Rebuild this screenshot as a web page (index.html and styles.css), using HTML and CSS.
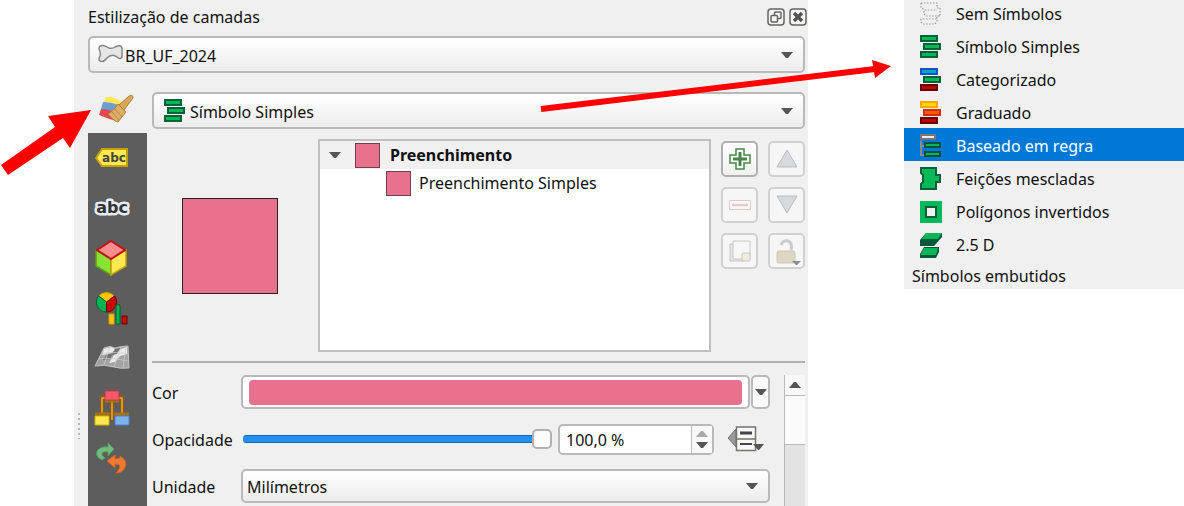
FILE: index.html
```html
<!DOCTYPE html>
<html lang="pt-BR">
<head>
    <meta charset="UTF-8">
    <meta name="viewport" content="width=device-width, initial-scale=1.0">
    <title>Estilização de camadas</title>
    <link rel="stylesheet" href="styles.css">
</head>
<body>
    <main class="page">
        <section class="panel">
            <header class="panel-title">
                <h1>Estilização de camadas</h1>
                <button type="button" class="title-btn" aria-label="Desacoplar">
                    <svg width="18" height="18" viewBox="0 0 18 18" fill="#f4f4f4" stroke="#66645f"><rect x="1" y="1" width="16" height="16" rx="3" stroke-width="1.5"/><rect x="7.500" y="4" width="6.500" height="6.500" rx="1" stroke-width="1.500"/><rect x="4" y="7.500" width="6.500" height="6.500" rx="1" stroke-width="1.500"/></svg>
                </button>
                <button type="button" class="title-btn" aria-label="Fechar">
                    <svg width="18" height="18" viewBox="0 0 18 18" fill="#f4f4f4" stroke="#66645f"><rect x="1" y="1" width="16" height="16" rx="3" stroke-width="1.5"/><path d="M5 5l8 8M13 5l-8 8" stroke="#55534f" stroke-width="3.400"/></svg>
                </button>
            </header>

            <div class="combo">
                <svg class="layer-icon" width="26" height="20" viewBox="0 0 26 20"><path d="M2 5Q2 1 6 1.500Q9 2 12 4Q15 5 18 3Q24 0 25 4V13Q23 16 20 13Q15 9 10 14Q6 19 3 17Q1 16 3 12Q4 9 2 5Z" fill="#e6e6e6" stroke="#858585" stroke-width="1.500"/></svg>
                <select aria-label="Camada"><option>BR_UF_2024</option></select>
                <svg class="arrow" width="12" height="6" viewBox="0 0 12 6"><path d="M0 0h12l-5 6h-2z" fill="#555"/></svg>
            </div>

            <div class="panel-body">
                <nav class="tabs">
                    <button type="button" class="tab active" aria-label="Simbologia">
                        <svg width="36" height="30" viewBox="0 0 36 30"><path d="M8 3Q15 2 24 8L21 12L6 8Z" fill="#fae659"/><path d="M5 8Q12 8 21 11L15 19L3 15Z" fill="#6f9ed6"/><path d="M3 15Q9 15 14 17L19 27Q10 25 1 21Z" fill="#e6484f"/><path d="M21 11L31 2Q35 0 35 4L26 16Z" fill="#d9a95b" stroke="#b27c2e"/><path d="M20 10L28 18L20 28Q17 28 10 20Q16 17 20 10Z" fill="#dcae68" stroke="#b27c2e"/><path d="M17 15l7 8M14 18l7 8" stroke="#b98640" fill="none"/></svg>
                    </button>
                    <button type="button" class="tab" aria-label="Rótulos">
                        <svg width="36" height="22" viewBox="0 0 36 22"><path d="M2 11L8 2H33V19H8Z" fill="#fce94f" stroke="#c4a000" stroke-width="2"/><text x="20" y="15" class="tag-text">abc</text></svg>
                    </button>
                    <button type="button" class="tab" aria-label="Máscaras">
                        <svg width="38" height="24" viewBox="0 0 38 24"><text x="18" y="17" class="mask-text">abc</text></svg>
                    </button>
                    <button type="button" class="tab" aria-label="Visão 3D">
                        <svg width="34" height="38" viewBox="0 0 34 38"><path d="M2 11L17 20V36L2 27Z" fill="#8ae234" stroke="#5ba316" stroke-width="1.500"/><path d="M17 20L32 11V27L17 36Z" fill="#fce94f" stroke="#c4a000" stroke-width="1.500"/><path d="M17 2L31 11L17 20L3 11Z" fill="#f78c8c" stroke="#bd1320" stroke-width="2"/></svg>
                    </button>
                    <button type="button" class="tab" aria-label="Diagramas">
                        <svg width="34" height="36" viewBox="0 0 34 36"><path d="M12.500 12L5 6A10 10 0 0 1 20 6Z" fill="#fcc500" stroke="#d7a000"/><path d="M12.500 12L4.500 6A10 10 0 0 0 12.500 22Z" fill="#09b453" stroke="#075e32"/><path d="M12.500 12L20.500 6A10 10 0 0 1 12.500 22Z" fill="#c80b0b" stroke="#710000"/><path d="M15 24h5v10h-5z" fill="#fcc500" stroke="#d7a000"/><path d="M22 15h4v19h-4z" fill="#09b453" stroke="#075e32"/><path d="M28 26h5v8h-5z" fill="#c80b0b" stroke="#710000"/></svg>
                    </button>
                    <button type="button" class="tab" aria-label="Sombreamento">
                        <svg width="36" height="26" viewBox="0 0 36 26"><path d="M10 3Q16 0 21 3Q28 1 34 1L35 23Q26 24 20 22Q10 19 1 21Z" fill="#a3a3a3" stroke="#c4c4c4"/><path d="M10 4l7-2l4 2l-4 5l-9 1zM27 4l6-2v7l-7 2l-5 6l-6 1l5-8z" fill="#eaeaea"/><path d="M13 9l6-1l-3 6l-7 1zM21 4l5-1l-3 6l-5 1z" fill="#747474"/><path d="M5 14Q14 12 34 16M8 9Q18 6 34 9M16 2L10 20M27 2L20 22M32 2L29 23" fill="none" stroke="#cfcfcf" stroke-width="0.700"/></svg>
                    </button>
                    <button type="button" class="tab" aria-label="Dependências">
                        <svg width="36" height="36" viewBox="0 0 36 36"><path d="M12 8H8V25M24 8H28V25M18 11V30" stroke="#8d5b0b" stroke-width="4" fill="none"/><path d="M12 8H8V25M24 8H28V25M18 11V30" stroke="#d5962d" stroke-width="2" fill="none"/><path d="M11 11h14M1 24h15M20 24h15" stroke="#a8700f" stroke-width="3"/><path d="M11 1h14v9h-14z" fill="#ef5c65" stroke="#cf3240"/><path d="M1 26h14v9h-14z" fill="#fce94f" stroke="#d4b100"/><path d="M21 26h14v9h-14z" fill="#80b2ed" stroke="#4d84c8"/></svg>
                    </button>
                    <button type="button" class="tab" aria-label="Histórico">
                        <svg width="34" height="32" viewBox="0 0 34 32"><path d="M8 18Q1 15 3 9Q6 4 14 5V1L20 7L14 14V10Q8 9 8 12Q8 14 11 16Z" fill="#74ba7c" stroke="#519b62"/><path d="M26 14Q34 19 31 25Q29 31 22 31Q25 28 26 25Q26 22 21 22V26L13 19L21 13V17Q27 17 26 14Z" fill="#ef7a32" stroke="#d96320"/></svg>
                    </button>
                </nav>

                <div class="content">
                    <div class="combo renderer">
                        <svg width="22" height="24" viewBox="0 0 22 24" class="bars green"><rect x="1" y="1" width="16" height="5"/><rect x="4" y="9" width="16" height="5"/><rect x="1" y="17" width="16" height="5"/></svg>
                        <select aria-label="Renderizador"><option>Símbolo Simples</option></select>
                        <svg class="arrow" width="12" height="6" viewBox="0 0 12 6"><path d="M0 0h12l-5 6h-2z" fill="#555"/></svg>
                    </div>

                    <div class="symbol">
                        <div class="preview"><div class="swatch big"></div></div>
                        <ul class="tree">
                            <li class="tree-root">
                                <svg width="12" height="6" viewBox="0 0 12 6"><path d="M0 0h12l-5 6h-2z" fill="#555"/></svg>
                                <span class="swatch"></span>Preenchimento
                            </li>
                            <li class="tree-child"><span class="swatch"></span>Preenchimento Simples</li>
                        </ul>
                        <div class="tools">
                            <button type="button" aria-label="Adicionar">
                                <svg width="24" height="24" viewBox="0 0 24 24"><path d="M8 2h8v6h6v8h-6v6h-8v-6h-6v-8h6z" fill="#fff" stroke="#47874a" stroke-width="1.500"/><path d="M12 5v14M5 12h14" stroke="#47874a" stroke-width="3"/></svg>
                            </button>
                            <button type="button" aria-label="Mover para cima" disabled>
                                <svg width="24" height="24" viewBox="0 0 24 24"><path d="M12 3L22 20H2Z" fill="#d7dadd" stroke="#b9bdc1"/></svg>
                            </button>
                            <button type="button" aria-label="Remover" disabled>
                                <svg width="24" height="24" viewBox="0 0 24 24"><path d="M1.500 7.500h21v9h-21z" fill="#fbf8f8" stroke="#dfc8ca"/><path d="M4 12h16" stroke="#e4cccd" stroke-width="2.500"/></svg>
                            </button>
                            <button type="button" aria-label="Mover para baixo" disabled>
                                <svg width="24" height="24" viewBox="0 0 24 24"><path d="M12 20L22 3H2Z" fill="#d7dadd" stroke="#b9bdc1"/></svg>
                            </button>
                            <button type="button" aria-label="Duplicar" disabled>
                                <svg width="24" height="24" viewBox="0 0 24 24"><path d="M2 5h5v14h10v3H2z" fill="#e4e4e4" stroke="#c8c8c8"/><path d="M5 2h17v18H5z" fill="#f7f7f7" stroke="#c8c8c8"/><rect x="14" y="14" width="8" height="8" rx="1" fill="#eeecdf" stroke="#cbc9b9"/></svg>
                            </button>
                            <button type="button" aria-label="Bloquear cor" disabled>
                                <svg width="28" height="28" viewBox="0 0 28 28"><path d="M8 8Q10 3 15 4Q20 6 18 13" fill="none" stroke="#ccc" stroke-width="3"/><rect x="4" y="14" width="18" height="12" rx="2" fill="#dcd7c5" stroke="#cdc7b3"/><path d="M19 24h9l-4 4h-1z" fill="#8c8c8c"/></svg>
                            </button>
                        </div>
                    </div>

                    <div class="properties">
                        <form class="fields">
                            <label for="cor">Cor</label>
                            <div class="color-row">
                                <button type="button" id="cor" class="color-btn"><span></span></button>
                                <button type="button" class="color-menu" aria-label="Opções de cor">
                                    <svg width="12" height="6" viewBox="0 0 12 6"><path d="M0 0h12l-5 6h-2z" fill="#555"/></svg>
                                </button>
                            </div>

                            <label for="opacidade">Opacidade</label>
                            <div class="opacity-row">
                                <input type="range" id="opacidade" min="0" max="100" value="100">
                                <div class="spin">
                                    <input type="text" value="100,0 %" aria-label="Valor da opacidade">
                                    <div class="spin-btns">
                                        <button type="button" aria-label="Aumentar"><svg width="12" height="6" viewBox="0 0 12 6"><path d="M0 6h12l-5-6h-2z" fill="#aaa"/></svg></button>
                                        <button type="button" aria-label="Diminuir"><svg width="12" height="6" viewBox="0 0 12 6"><path d="M0 0h12l-5 6h-2z" fill="#555"/></svg></button>
                                    </div>
                                </div>
                                <button type="button" class="override" aria-label="Sobreposição definida por dados">
                                    <svg width="36" height="28" viewBox="0 0 36 28"><path d="M8 4v18L0 13z" fill="#999" stroke="#777"/><path d="M8.500 2h19v23.500h-19zM8.500 14h19" fill="#f8f8f6" stroke="#74746c" stroke-width="1.500"/><path d="M12 8h12" stroke="#444" stroke-width="3"/><path d="M12 19h12" stroke="#444" stroke-width="2"/><path d="M25 19h11l-5 6h-1z" fill="#555"/></svg>
                                </button>
                            </div>

                            <label for="unidade">Unidade</label>
                            <div class="combo unit">
                                <select id="unidade"><option>Milímetros</option></select>
                                <svg class="arrow" width="12" height="6" viewBox="0 0 12 6"><path d="M0 0h12l-5 6h-2z" fill="#555"/></svg>
                            </div>
                        </form>
                        <div class="scrollbar">
                            <button type="button" aria-label="Rolar para cima"><svg width="12" height="6" viewBox="0 0 12 6"><path d="M0 6h12l-5-6h-2z" fill="#555"/></svg></button>
                            <div class="thumb"></div>
                        </div>
                    </div>
                </div>
            </div>
            <svg class="grip" width="4" height="28" viewBox="0 0 4 28"><path d="M2 1v26" stroke="#b5b5b5" stroke-width="2" stroke-dasharray="2 3"/></svg>
        </section>

        <ul class="menu">
            <li><button type="button">
                <svg width="22" height="24" viewBox="0 0 22 24" fill="none" stroke="#999" stroke-width="1.200" stroke-dasharray="1.500 1.500"><path d="M1 1H17V6H20V14H17V19L15 22H3L1 20V17H4M1 1V5L4 8H17M4 9V12L6 14H20M3 17H17"/></svg>
                Sem Símbolos</button></li>
            <li><button type="button">
                <svg width="22" height="24" viewBox="0 0 22 24" class="bars green"><rect x="1" y="1" width="16" height="5"/><rect x="4" y="9" width="16" height="5"/><rect x="1" y="17" width="16" height="5"/></svg>
                Símbolo Simples</button></li>
            <li><button type="button">
                <svg width="22" height="24" viewBox="0 0 22 24" class="bars"><rect x="1" y="1" width="16" height="5" fill="#06a5c6" stroke="#1552c4"/><rect x="4" y="9" width="16" height="5" fill="#04b857" stroke="#086137"/><rect x="1" y="17" width="16" height="5" fill="#bb0803" stroke="#6b0505"/></svg>
                Categorizado</button></li>
            <li><button type="button">
                <svg width="22" height="24" viewBox="0 0 22 24" class="bars"><rect x="1" y="1" width="16" height="5" fill="#ffd800" stroke="#ffa40b"/><rect x="4" y="9" width="16" height="5" fill="#ff5507" stroke="#cf3009"/><rect x="1" y="17" width="16" height="5" fill="#bb0803" stroke="#6b0505"/></svg>
                Graduado</button></li>
            <li><button type="button" class="selected">
                <svg width="22" height="24" viewBox="0 0 22 24" class="bars"><path d="M1 7v14h4M1 12h4" fill="none" stroke="#8a8a8a"/><rect x="1" y="1" width="14" height="4" fill="#eee" stroke="#777"/><rect x="5" y="9" width="15" height="4" fill="#04b857" stroke="#08513a"/><rect x="5" y="18" width="15" height="4" fill="#04b857" stroke="#08513a"/></svg>
                Baseado em regra</button></li>
            <li><button type="button">
                <svg width="22" height="24" viewBox="0 0 22 24" class="bars green"><path d="M1 1H16V8H20V15H16V22H1V17L3 15V8L1 6Z"/></svg>
                Feições mescladas</button></li>
            <li><button type="button">
                <svg width="22" height="24" viewBox="0 0 22 24"><path d="M0 1h22v22H0z" fill="#04b857"/><path d="M6 7h10v10H6z" fill="#f0f0f0" stroke="#08613a" stroke-width="2"/></svg>
                Polígonos invertidos</button></li>
            <li><button type="button">
                <svg width="22" height="26" viewBox="0 0 22 26"><path d="M0 8L6 1H22V5L14 14H0Z" fill="#07583b"/><path d="M2 7L6 1H22L18 7Z" fill="#04b857"/><path d="M0 22L4 15H19V20L16 26H0Z" fill="#07583b"/><path d="M1 22L4 16H18L16 23H1Z" fill="#04b857"/></svg>
                2.5 D</button></li>
            <li class="menu-label">Símbolos embutidos</li>
        </ul>

        <svg class="pointer pointer-tab" width="92" height="70" viewBox="0 0 92 70"><path d="M1 58L55 20L48 9L91 3L70 41L63 31L8 68Z" fill="#f00"/></svg>
        <svg class="pointer pointer-menu" width="352" height="56" viewBox="0 0 352 56"><path d="M1 51L335 11" stroke="#f00" stroke-width="6"/><path d="M332 2L351 8L335 20Z" fill="#f00"/></svg>
    </main>
</body>
</html>
```
FILE: styles.css
```css
* {
    box-sizing: border-box;
}
body {
    margin: 0;
    background: #fff;
    color: #111;
    font-family: "Noto Sans", sans-serif;
    font-size: 16px;
    line-height: 20px;
}
button, input, select {
    font: inherit;
    color: inherit;
    padding: 0;
    margin: 0;
    border: none;
    background: none;
}
ul {
    list-style: none;
    margin: 0;
    padding: 0;
}
svg {
    display: block;
    flex: none;
}
.page {
    position: relative;
    display: flex;
    align-items: flex-start;
    gap: 96px;
    height: 100vh;
    padding-left: 74px;
    overflow: hidden;
}
.panel {
    position: relative;
    flex: 1;
    min-height: 100vh;
    padding: 0 3px 0 14px;
    background: #f0f0f0;
}
.panel-title {
    display: flex;
    align-items: center;
    gap: 4px;
    height: 34px;
    margin-bottom: 2px;
    margin-right: -2px;
}
.panel-title h1 {
    flex: 1;
    margin: 0;
    font-size: 16px;
    font-weight: normal;
}
.title-btn {
    width: 18px;
}
.combo {
    display: flex;
    align-items: center;
    height: 37px;
    padding: 0 10px;
    border: 2px solid #b9b9b9;
    border-radius: 5px;
    background: linear-gradient(#fff, #ececec);
}
.combo select {
    flex: 1;
    min-width: 0;
    height: 100%;
    padding-top: 2px;
    appearance: none;
    outline: none;
}
.combo .arrow {
    pointer-events: none;
}
.layer-icon {
    margin: 0 2px 2px -3px;
}
.renderer {
    gap: 4px;
}
.unit {
    height: 34px;
    padding-left: 4px;
}
.panel-body {
    display: flex;
    gap: 5px;
    padding-top: 11px;
}
.tabs {
    display: flex;
    flex-direction: column;
    width: 59px;
    height: 440px;
    background: #5d5d5d;
}
.tab {
    display: flex;
    align-items: center;
    height: 50px;
    padding-left: 6px;
}
.tab.active {
    height: 49px;
    padding-left: 10px;
    background: #f0f0f0;
}
.tag-text {
    font: bold 12px "DejaVu Sans", sans-serif;
    text-anchor: middle;
    fill: #444;
}
.mask-text {
    font: bold 16px "DejaVu Sans", sans-serif;
    text-anchor: middle;
    fill: #333;
    stroke: #e6ebfa;
    stroke-width: 5px;
    stroke-linejoin: round;
    paint-order: stroke;
}
.content {
    flex: 1;
    min-width: 0;
    padding-top: 8px;
}
.symbol {
    display: flex;
    gap: 10px;
    margin-top: 10px;
    padding-bottom: 9px;
    border-bottom: 2px solid #b0b0b0;
}
.preview {
    display: flex;
    justify-content: center;
    align-items: center;
    width: 156px;
}
.swatch {
    flex: none;
    width: 25px;
    height: 25px;
    border: 1px solid #70404c;
    background: #e8718d;
}
.swatch.big {
    width: 96px;
    height: 96px;
    border: 1px solid #2a2024;
}
.tree {
    flex: 1;
    height: 213px;
    border: 2px solid #c0c0c0;
    background: #fff;
}
.tree li {
    display: flex;
    align-items: center;
    height: 28px;
}
.tree-root {
    gap: 10px;
    padding-left: 9px;
    background: #f0f0f0;
    font-weight: bold;
}
.tree-root .swatch {
    margin-left: 4px;
}
.tree-child {
    gap: 8px;
    padding-left: 66px;
}
.tools {
    display: grid;
    grid-template-columns: 37px 37px;
    grid-auto-rows: 36px;
    gap: 10px;
    padding-top: 2px;
}
.tools button {
    display: flex;
    justify-content: center;
    align-items: center;
    border: 2px solid #b0b0b0;
    border-radius: 5px;
    background: linear-gradient(#fff, #f0f0f0);
}
.tools button:disabled {
    border-color: #d0d0d0;
    background: #f6f6f6;
}
.properties {
    display: flex;
    gap: 14px;
    padding-top: 12px;
}
.fields {
    flex: 1;
    display: grid;
    grid-template-columns: 89px 1fr;
    grid-template-rows: 34px 30px 34px;
    align-items: center;
    row-gap: 15px;
}
.fields label {
    padding-top: 2px;
}
.color-row {
    display: flex;
    gap: 1px;
    height: 34px;
}
.color-btn {
    flex: 1;
    padding: 3px 6px;
    border: 2px solid #b9b9b9;
    border-radius: 5px;
    background: #fff;
}
.color-btn span {
    display: block;
    height: 25px;
    border-radius: 4px;
    background: #e8718d;
}
.color-menu {
    display: flex;
    justify-content: center;
    align-items: center;
    width: 19px;
    border: 2px solid #b9b9b9;
    border-radius: 5px;
    background: #fafafa;
}
.opacity-row {
    display: flex;
    align-items: center;
    padding-right: 6px;
}
.opacity-row input[type="range"] {
    flex: 1;
    min-width: 0;
    height: 20px;
    margin-left: 2px;
    appearance: none;
}
/* groove stops under the handle */
input[type="range"]::-webkit-slider-runnable-track {
    height: 8px;
    border-radius: 3px;
    background: linear-gradient(#1468b4 0 1px, #2490ee 1px 7px, #1468b4 7px) no-repeat;
    background-size: calc(100% - 10px) 100%;
}
input[type="range"]::-webkit-slider-thumb {
    appearance: none;
    width: 20px;
    height: 20px;
    margin-top: -6px;
    border: 2px solid #b0b0b0;
    border-radius: 5px;
    background: #fcfcfc;
}
.spin {
    display: flex;
    width: 156px;
    height: 31px;
    margin: 0 14px 0 6px;
    border: 2px solid #b9b9b9;
    border-radius: 5px;
    background: #fff;
}
.spin input {
    flex: 1;
    min-width: 0;
    padding: 2px 0 0 6px;
    outline: none;
}
.spin-btns {
    display: flex;
    flex-direction: column;
    justify-content: center;
    gap: 5px;
    padding: 0 4px;
    border-left: 1px solid #b9b9b9;
    background: #f8f8f8;
}
.scrollbar {
    width: 21px;
    height: 140px;
    border-left: 1px solid #b9b9b9;
    background: #e3e3e3;
}
.scrollbar button {
    display: flex;
    justify-content: center;
    align-items: center;
    width: 100%;
    height: 21px;
    border-bottom: 1px solid #b9b9b9;
    background: #f8f8f8;
}
.thumb {
    height: 49px;
    border-bottom: 1px solid #b9b9b9;
    background: #fbfbfb;
}
.grip {
    position: absolute;
    left: 3px;
    top: 412px;
}
.menu {
    width: 280px;
    margin-top: -4px;
    background: #f0f0f0;
}
.menu button {
    display: flex;
    align-items: center;
    gap: 14px;
    width: 100%;
    height: 33px;
    padding: 2px 0 0 16px;
    text-align: left;
}
.menu .selected {
    background: #0078d7;
    color: #fff;
}
.menu-label {
    height: 29px;
    padding: 6px 8px;
}
.bars {
    stroke-width: 2px;
}
.green {
    fill: #04b857;
    stroke: #086137;
}
/* red arrows drawn over the panels */
.pointer {
    position: absolute;
    pointer-events: none;
}
.pointer-tab {
    left: 0;
    top: 107px;
}
.pointer-menu {
    left: 540px;
    top: 58px;
}
```
